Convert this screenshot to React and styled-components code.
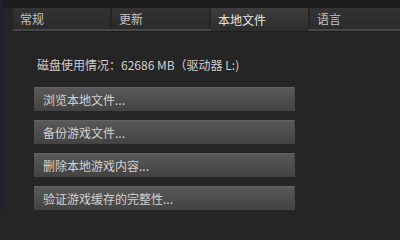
import React from 'react';
import styled, { createGlobalStyle } from 'styled-components';

const GlobalStyle = createGlobalStyle`
  html, body {
    margin: 0;
    padding: 0;
    background: #252525;
  }
  body {
    font-family: "Noto Sans CJK SC", "Noto Sans", sans-serif;
  }
`;

const Window = styled.div`
  width: 400px;
  height: 212px;
  display: flex;
  overflow: hidden;
  background: #252525;
`;

const EdgeStrip = styled.div`
  width: 3px;
  flex-shrink: 0;
  background: linear-gradient(to right, #1a232c, #20262b);
`;

const Main = styled.div`
  flex: 1;
  display: flex;
  flex-direction: column;
  background: linear-gradient(to bottom, #1d1d1d 0, #1d1d1d 8px, #252525 8px);
  padding-left: 10px;
  overflow: hidden;
`;

const TabBar = styled.div`
  display: flex;
  gap: 2px;
  margin-top: 8px;
  height: 21px;
  border-bottom: 2px solid #474747;
  box-shadow: 0 1px 0 #1e1e1e;
  white-space: nowrap;
`;

const Tab = styled.div`
  flex: 0 0 97px;
  height: ${p => (p.$active ? '23px' : '21px')};
  box-sizing: border-box;
  padding-left: 7px;
  display: flex;
  align-items: center;
  font-size: 12px;
  color: ${p => (p.$active ? '#e4e4e4' : '#c4c4c4')};
  background: ${p =>
    p.$active
      ? 'linear-gradient(to bottom, #3e3e3e, #2c2c2c)'
      : 'linear-gradient(to bottom, #333333, #2b2b2b)'};
  position: relative;
  z-index: ${p => (p.$active ? 1 : 0)};
`;

const Body = styled.div`
  display: flex;
  flex-direction: column;
  padding: 26px 0 0 21px;
`;

const DiskInfo = styled.div`
  font-size: 12px;
  line-height: 16px;
  color: #cfcfcf;
  padding-left: 3px;
  margin-bottom: 14px;
  white-space: nowrap;
`;

const ActionList = styled.div`
  display: flex;
  flex-direction: column;
  gap: 9px;
`;

const ActionButton = styled.div`
  width: 261px;
  height: 24px;
  box-sizing: border-box;
  display: flex;
  align-items: center;
  padding-left: 9px;
  font-size: 12px;
  color: #d2d2d2;
  background: linear-gradient(to bottom, #5a5a5a, #424242);
  border-right: 1px solid #4a4a4a;
  box-shadow: inset 0 1px 0 #626262;
  white-space: nowrap;
`;

const tabs = ['常规', '更新', '本地文件', '语言'];
const actions = [
  '浏览本地文件...',
  '备份游戏文件...',
  '删除本地游戏内容...',
  '验证游戏缓存的完整性...',
];

export default function App() {
  return (
    <>
      <GlobalStyle />
      <Window>
        <EdgeStrip />
        <Main>
          <TabBar>
            {tabs.map(t => (
              <Tab key={t} $active={t === '本地文件'}>{t}</Tab>
            ))}
          </TabBar>
          <Body>
            <DiskInfo>磁盘使用情况：62686 MB（驱动器 L:)</DiskInfo>
            <ActionList>
              {actions.map(a => (
                <ActionButton key={a}>{a}</ActionButton>
              ))}
            </ActionList>
          </Body>
        </Main>
      </Window>
    </>
  );
}
